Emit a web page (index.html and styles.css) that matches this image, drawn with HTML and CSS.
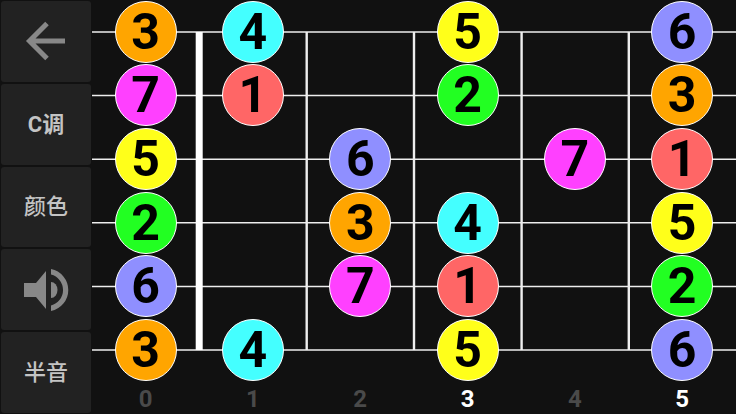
FILE: index.html
```html
<!DOCTYPE html>
<html lang="zh-CN">
<head>
  <meta charset="UTF-8">
  <meta name="viewport" content="width=device-width, initial-scale=1.0">
  <title>Guitar Scale</title>
  <link rel="stylesheet" href="styles.css">
</head>
<body>
  <div class="app">
    <!-- Side buttons -->
    <div class="sidebar">
      <button class="side-btn">
        <svg width="46" height="46" viewBox="0 0 46 46"><path d="M42 23H8M24 5.500 6.500 23 24 40.500" fill="none" stroke="#888" stroke-width="5"/></svg>
      </button>
      <button class="side-btn side-btn-key"><span class="side-label">C调</span></button>
      <button class="side-btn"><span class="side-label">颜色</span></button>
      <button class="side-btn">
        <svg width="48" height="46" viewBox="0 0 48 46"><path d="M2 16H14L24 4V42L14 30H2Z" fill="#888"/><path d="M29 15A6.500 8 0 0 1 29 31Z" fill="#888"/><path d="M29 2A21.400 21.400 0 0 1 29 44V38.500A16 16 0 0 0 29 7.500Z" fill="#888"/></svg>
      </button>
      <button class="side-btn"><span class="side-label">半音</span></button>
    </div>

    <!-- Fretboard -->
    <div class="board">
      <svg class="lines" width="644" height="414" viewBox="0 0 644 414">
        <path stroke="#eee" stroke-width="1.500" d="M0 32H644M0 95.600H644M0 159.200H644M0 222.800H644M0 286.400H644M0 350H644"/>
        <path stroke="#eee" stroke-width="2.400" d="M214.700 32V350M322 32V350M429.600 32V350M536.800 32V350"/>
        <rect x="103.700" y="32" width="7" height="318" fill="#fff"/>
      </svg>

      <div class="cell"><span class="note n3">3</span></div>
      <div class="cell"><span class="note n4">4</span></div>
      <div class="cell"></div>
      <div class="cell"><span class="note n5">5</span></div>
      <div class="cell"></div>
      <div class="cell"><span class="note n6">6</span></div>

      <div class="cell"><span class="note n7">7</span></div>
      <div class="cell"><span class="note n1">1</span></div>
      <div class="cell"></div>
      <div class="cell"><span class="note n2">2</span></div>
      <div class="cell"></div>
      <div class="cell"><span class="note n3">3</span></div>

      <div class="cell"><span class="note n5">5</span></div>
      <div class="cell"></div>
      <div class="cell"><span class="note n6">6</span></div>
      <div class="cell"></div>
      <div class="cell"><span class="note n7">7</span></div>
      <div class="cell"><span class="note n1">1</span></div>

      <div class="cell"><span class="note n2">2</span></div>
      <div class="cell"></div>
      <div class="cell"><span class="note n3">3</span></div>
      <div class="cell"><span class="note n4">4</span></div>
      <div class="cell"></div>
      <div class="cell"><span class="note n5">5</span></div>

      <div class="cell"><span class="note n6">6</span></div>
      <div class="cell"></div>
      <div class="cell"><span class="note n7">7</span></div>
      <div class="cell"><span class="note n1">1</span></div>
      <div class="cell"></div>
      <div class="cell"><span class="note n2">2</span></div>

      <div class="cell"><span class="note n3">3</span></div>
      <div class="cell"><span class="note n4">4</span></div>
      <div class="cell"></div>
      <div class="cell"><span class="note n5">5</span></div>
      <div class="cell"></div>
      <div class="cell"><span class="note n6">6</span></div>

      <div class="fret-no">0</div>
      <div class="fret-no">1</div>
      <div class="fret-no">2</div>
      <div class="fret-no fret-on">3</div>
      <div class="fret-no">4</div>
      <div class="fret-no fret-on">5</div>
    </div>
  </div>
</body>
</html>
```

FILE: styles.css
```css
body {
  margin: 0;
  background-color: #111;
  font-family: Roboto, "Noto Sans CJK SC", sans-serif;
  overflow: hidden;
}
.app {
  display: flex;
  width: 736px;
  height: 414px;
}
.sidebar {
  width: 92px;
  display: flex;
  flex-direction: column;
  gap: 2px;
  padding: 1px;
  box-sizing: border-box;
}
.side-btn {
  flex: 1;
  padding: 0;
  display: flex;
  align-items: center;
  justify-content: center;
  color: #c4c4c4;
  background-color: #222;
  border: none;
  border-radius: 3px;
  font-family: inherit;
  font-size: 22px;
  font-weight: 500;
}
.side-label {
  margin-top: -5px;
}
.side-btn-key {
  font-weight: 700;
}
.board {
  position: relative;
  width: 644px;
  display: grid;
  grid-template-columns: repeat(6, 107.300px);
  grid-template-rows: repeat(6, 63.650px) 32px;
  align-content: start;
}
.lines {
  position: absolute;
  left: 0;
  top: 0;
}
.cell {
  position: relative;
  display: flex;
  align-items: center;
  justify-content: center;
}
.note {
  width: 60px;
  height: 60px;
  flex: none;
  border: 1px solid #fff;
  border-radius: 50%;
  display: flex;
  align-items: center;
  justify-content: center;
  color: #000;
  font-size: 50px;
  font-weight: 700;
  line-height: 1;
}
.n1 { background-color: #ff6666; }
.n2 { background-color: #22ff22; }
.n3 { background-color: #ffa500; }
.n4 { background-color: #44ffff; }
.n5 { background-color: #ffff1a; }
.n6 { background-color: #8f8fff; }
.n7 { background-color: #ff40ff; }
.fret-no {
  display: flex;
  align-items: center;
  justify-content: center;
  padding-top: 3px;
  color: #4a4a4a;
  font-size: 24px;
  font-weight: 700;
}
.fret-on {
  color: #fff;
}
```
